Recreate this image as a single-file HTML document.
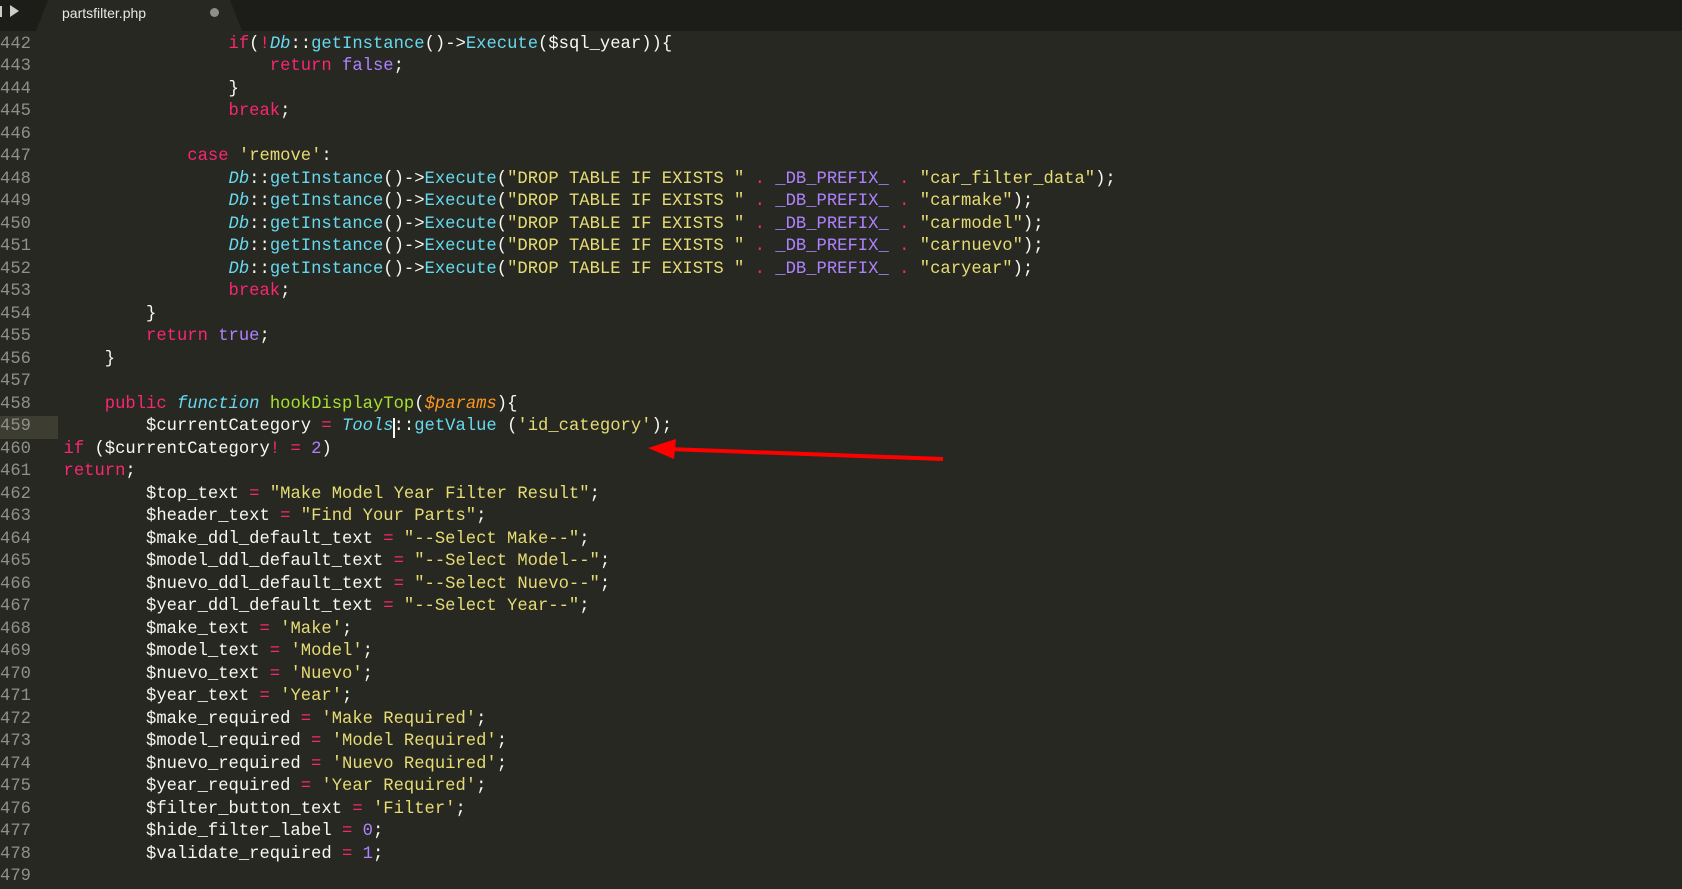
<!DOCTYPE html>
<html><head><meta charset="utf-8"><style>
html,body{margin:0;padding:0;}
body{width:1682px;height:876px;background:#272822;overflow:hidden;position:relative;font-family:"Liberation Mono",monospace;font-size:17.2px;}
#tabbar{position:absolute;left:0;top:0;width:1682px;height:31px;background:#1c1c18;}
#tab{position:absolute;left:36px;top:0;width:206px;height:31px;background:#272822;clip-path:polygon(12px 0,194px 0,206px 31px,0 31px);}
#tabtext{position:absolute;left:62px;top:5px;font-family:"Liberation Sans",sans-serif;font-size:14px;color:#e8e8e0;}
#dot{position:absolute;left:210px;top:8px;width:9px;height:9px;border-radius:50%;background:#8f8f8a;}
.ln{position:absolute;left:0;width:40px;color:#8f908a;line-height:22.5px;white-space:pre;}
.cl{position:absolute;left:63.5px;color:#f8f8f2;line-height:22.5px;white-space:pre;}
.k{color:#f92672}.s{color:#e6db74}.f{color:#a6e22e}.t{color:#66d9ef;font-style:italic}.n{color:#66d9ef}.c{color:#ae81ff}.p{color:#fd971f;font-style:italic}
#hl{position:absolute;left:0;top:416px;width:58px;height:22.5px;background:#3e3d32;}
</style></head><body>
<div id="tabbar"><span style="position:absolute;left:0;top:6px;width:2px;height:11px;background:#ccc"></span><span style="position:absolute;left:10px;top:5px;width:0;height:0;border-left:9px solid #ccc;border-top:6px solid transparent;border-bottom:6px solid transparent"></span><div id="tab"></div><div id="tabtext">partsfilter.php</div><div id="dot"></div></div>
<div id="hl"></div>
<svg style="position:absolute;left:0;top:0" width="1682" height="876"><line x1="943" y1="459" x2="668" y2="449" stroke="#ff0000" stroke-width="4"/><polygon points="648,448 676,439 674,459" fill="#ff0000"/></svg>
<div class="ln" style="top:33.5px">442<br>443<br>444<br>445<br>446<br>447<br>448<br>449<br>450<br>451<br>452<br>453<br>454<br>455<br>456<br>457<br>458<br>459<br>460<br>461<br>462<br>463<br>464<br>465<br>466<br>467<br>468<br>469<br>470<br>471<br>472<br>473<br>474<br>475<br>476<br>477<br>478<br>479</div>
<div class="cl" style="top:33.5px">                <span class="k">if</span>(<span class="k">!</span><span class="t">Db</span>::<span class="n">getInstance</span>()-&gt;<span class="n">Execute</span>($sql_year)){
                    <span class="k">return</span> <span class="c">false</span>;
                }
                <span class="k">break</span>;

            <span class="k">case</span> <span class="s">'remove'</span>:
                <span class="t">Db</span>::<span class="n">getInstance</span>()-&gt;<span class="n">Execute</span>(<span class="s">"DROP TABLE IF EXISTS "</span> <span class="k">.</span> <span class="c">_DB_PREFIX_</span> <span class="k">.</span> <span class="s">"car_filter_data"</span>);
                <span class="t">Db</span>::<span class="n">getInstance</span>()-&gt;<span class="n">Execute</span>(<span class="s">"DROP TABLE IF EXISTS "</span> <span class="k">.</span> <span class="c">_DB_PREFIX_</span> <span class="k">.</span> <span class="s">"carmake"</span>);
                <span class="t">Db</span>::<span class="n">getInstance</span>()-&gt;<span class="n">Execute</span>(<span class="s">"DROP TABLE IF EXISTS "</span> <span class="k">.</span> <span class="c">_DB_PREFIX_</span> <span class="k">.</span> <span class="s">"carmodel"</span>);
                <span class="t">Db</span>::<span class="n">getInstance</span>()-&gt;<span class="n">Execute</span>(<span class="s">"DROP TABLE IF EXISTS "</span> <span class="k">.</span> <span class="c">_DB_PREFIX_</span> <span class="k">.</span> <span class="s">"carnuevo"</span>);
                <span class="t">Db</span>::<span class="n">getInstance</span>()-&gt;<span class="n">Execute</span>(<span class="s">"DROP TABLE IF EXISTS "</span> <span class="k">.</span> <span class="c">_DB_PREFIX_</span> <span class="k">.</span> <span class="s">"caryear"</span>);
                <span class="k">break</span>;
        }
        <span class="k">return</span> <span class="c">true</span>;
    }

    <span class="k">public</span> <span class="t">function</span> <span class="f">hookDisplayTop</span>(<span class="p">$params</span>){
        $currentCategory <span class="k">=</span> <span class="t">Tools</span>::<span class="n">getValue</span> (<span class="s">'id_category'</span>);
<span class="k">if</span> ($currentCategory<span class="k">!</span> <span class="k">=</span> <span class="c">2</span>)
<span class="k">return</span>;
        $top_text <span class="k">=</span> <span class="s">"Make Model Year Filter Result"</span>;
        $header_text <span class="k">=</span> <span class="s">"Find Your Parts"</span>;
        $make_ddl_default_text <span class="k">=</span> <span class="s">"--Select Make--"</span>;
        $model_ddl_default_text <span class="k">=</span> <span class="s">"--Select Model--"</span>;
        $nuevo_ddl_default_text <span class="k">=</span> <span class="s">"--Select Nuevo--"</span>;
        $year_ddl_default_text <span class="k">=</span> <span class="s">"--Select Year--"</span>;
        $make_text <span class="k">=</span> <span class="s">'Make'</span>;
        $model_text <span class="k">=</span> <span class="s">'Model'</span>;
        $nuevo_text <span class="k">=</span> <span class="s">'Nuevo'</span>;
        $year_text <span class="k">=</span> <span class="s">'Year'</span>;
        $make_required <span class="k">=</span> <span class="s">'Make Required'</span>;
        $model_required <span class="k">=</span> <span class="s">'Model Required'</span>;
        $nuevo_required <span class="k">=</span> <span class="s">'Nuevo Required'</span>;
        $year_required <span class="k">=</span> <span class="s">'Year Required'</span>;
        $filter_button_text <span class="k">=</span> <span class="s">'Filter'</span>;
        $hide_filter_label <span class="k">=</span> <span class="c">0</span>;
        $validate_required <span class="k">=</span> <span class="c">1</span>;
</div>
<div style="position:absolute;left:393px;top:418px;width:2px;height:20px;background:#f8f8f0"></div>
</body></html>
